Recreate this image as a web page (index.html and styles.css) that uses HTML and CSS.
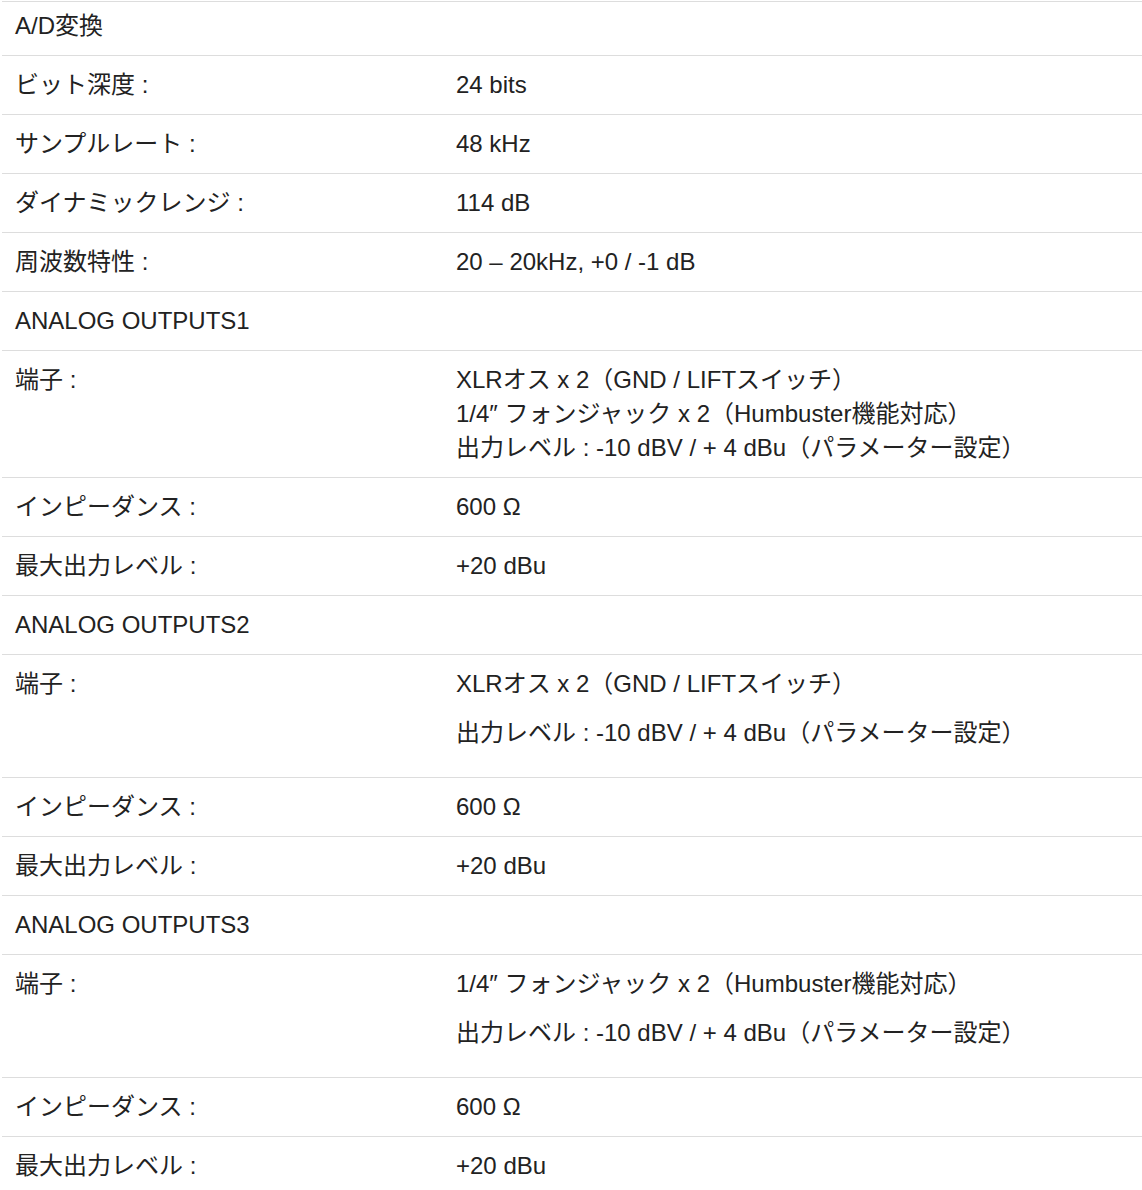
FILE: index.html
```html
<!DOCTYPE html>
<html lang="ja">
<head>
    <meta charset="utf-8">
    <title>仕様</title>
    <link rel="stylesheet" href="styles.css">
</head>
<body>
    <div class="spec-wrap">
        <table class="spec-table">
            <tr class="spec-head first">
                <td colspan="2">A/D変換</td>
            </tr>
            <tr>
                <td class="spec-label">ビット深度 :</td>
                <td>24 bits</td>
            </tr>
            <tr>
                <td class="spec-label">サンプルレート :</td>
                <td>48 kHz</td>
            </tr>
            <tr>
                <td class="spec-label">ダイナミックレンジ :</td>
                <td>114 dB</td>
            </tr>
            <tr>
                <td class="spec-label">周波数特性 :</td>
                <td>20 – 20kHz, +0 / -1 dB</td>
            </tr>

            <tr class="spec-head">
                <td colspan="2">ANALOG OUTPUTS1</td>
            </tr>
            <tr>
                <td class="spec-label">端子 :</td>
                <td>XLRオス x 2（GND / LIFTスイッチ）<br>1/4″ フォンジャック x 2（Humbuster機能対応）<br>出力レベル : -10 dBV / + 4 dBu（パラメーター設定）</td>
            </tr>
            <tr>
                <td class="spec-label">インピーダンス :</td>
                <td>600 Ω</td>
            </tr>
            <tr>
                <td class="spec-label">最大出力レベル :</td>
                <td>+20 dBu</td>
            </tr>

            <tr class="spec-head">
                <td colspan="2">ANALOG OUTPUTS2</td>
            </tr>
            <tr>
                <td class="spec-label">端子 :</td>
                <td>
                    <p>XLRオス x 2（GND / LIFTスイッチ）</p>
                    <p>出力レベル : -10 dBV / + 4 dBu（パラメーター設定）</p>
                </td>
            </tr>
            <tr>
                <td class="spec-label">インピーダンス :</td>
                <td>600 Ω</td>
            </tr>
            <tr>
                <td class="spec-label">最大出力レベル :</td>
                <td>+20 dBu</td>
            </tr>

            <tr class="spec-head">
                <td colspan="2">ANALOG OUTPUTS3</td>
            </tr>
            <tr>
                <td class="spec-label">端子 :</td>
                <td>
                    <p>1/4″ フォンジャック x 2（Humbuster機能対応）</p>
                    <p>出力レベル : -10 dBV / + 4 dBu（パラメーター設定）</p>
                </td>
            </tr>
            <tr>
                <td class="spec-label">インピーダンス :</td>
                <td>600 Ω</td>
            </tr>
            <tr>
                <td class="spec-label">最大出力レベル :</td>
                <td>+20 dBu</td>
            </tr>
        </table>
    </div>
</body>
</html>
```

FILE: styles.css
```css
body {
    font-family: "Liberation Sans", Arial, "Noto Sans CJK JP", sans-serif;
    color: #222;
    background-color: #fff;
    margin: 0;
    padding: 0;
}

.spec-wrap {
    padding: 1px 0 0 2px;
}

.spec-table {
    width: 1140px;
    border-collapse: collapse;
    font-size: 24px;
    line-height: 34px;
}

.spec-table td {
    box-sizing: border-box;
    height: 59px;
    padding: 12px 13px;
    border-top: 1px solid #ddd;
    vertical-align: baseline;
}

.spec-table tr:last-child td {
    border-bottom: 1px solid #ddd;
}

.spec-table .spec-label {
    width: 441px;
}

.spec-table p {
    margin: 0 0 15px;
}

.spec-head.first td {
    height: 54px;
    padding-top: 7px;
    padding-bottom: 12px;
}
```
